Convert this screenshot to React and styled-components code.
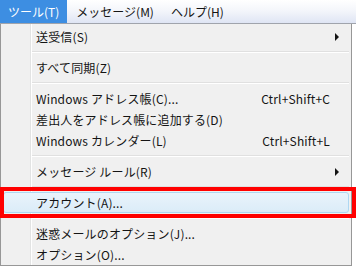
import React from "react";
import styled, { createGlobalStyle } from "styled-components";

const Global = createGlobalStyle`
  html, body {
    margin: 0;
    padding: 0;
    background: #ffffff;
  }
  body {
    font-family: "Noto Sans CJK JP", "Noto Sans", sans-serif;
    font-size: 12px;
    color: #141414;
  }
`;

const Screen = styled.div`
  position: relative;
  width: 356px;
  height: 268px;
  overflow: hidden;
`;

const MenuBar = styled.div`
  display: flex;
  height: 23px;
  border-bottom: 1px solid #a0a4ac;
  background: linear-gradient(#ffffff 0%, #f4f6fb 45%, #dfe5f4 100%);
`;

const BarItem = styled.div`
  display: flex;
  align-items: center;
  padding: 0 ${(p) => p.$pad || 8}px;
  height: 23px;
  color: ${(p) => (p.$active ? "#ffffff" : "#141414")};
  background: ${(p) => (p.$active ? "#3d8ee2" : "transparent")};
`;

const Menu = styled.div`
  position: relative;
  width: 350px;
  padding: 2px 0 0;
  background: #f0f0f0;
  border-left: 1px solid #979797;
  border-right: 1px solid #979797;
  border-bottom: 1px solid #979797;
  display: flex;
  flex-direction: column;
`;

const Gutter = styled.div`
  position: absolute;
  left: 29px;
  top: 0;
  bottom: 0;
  width: 1px;
  background: #e2e3e3;
  border-right: 1px solid #ffffff;
`;

const Item = styled.div`
  position: relative;
  display: flex;
  align-items: center;
  height: 21px;
  margin: 0 2px;
  padding: 0 18px 0 32px;
  border: 1px solid ${(p) => (p.$hover ? "#aed7f2" : "transparent")};
  border-radius: 3px;
  box-sizing: border-box;
  letter-spacing: 0.15px;
  background: ${(p) =>
    p.$hover ? "linear-gradient(#e9f3fb, #dbecf8)" : "transparent"};
`;

const Label = styled.span`
  flex: 1;
  white-space: nowrap;
`;

const Shortcut = styled.span`
  white-space: nowrap;
`;

const Arrow = styled.span`
  width: 0;
  height: 0;
  margin-right: -9px;
  border-top: 4px solid transparent;
  border-bottom: 4px solid transparent;
  border-left: 4px solid #141414;
`;

const Separator = styled.div`
  height: 10px;
  display: flex;
  align-items: center;
  padding-left: 31px;
  padding-right: 2px;

  &::after {
    content: "";
    flex: 1;
    height: 1px;
    background: #e0e0e0;
    border-bottom: 1px solid #ffffff;
  }
`;

const Highlight = styled.div`
  position: absolute;
  left: 0;
  top: 187px;
  width: 356px;
  height: 31px;
  box-sizing: border-box;
  border: 4px solid #ff0000;
`;

const rows = [
  { label: "送受信(S)", arrow: true },
  "sep",
  { label: "すべて同期(Z)" },
  "sep",
  { label: "Windows アドレス帳(C)...", key: "Ctrl+Shift+C" },
  { label: "差出人をアドレス帳に追加する(D)" },
  { label: "Windows カレンダー(L)", key: "Ctrl+Shift+L" },
  "sep",
  { label: "メッセージ ルール(R)", arrow: true },
  "sep",
  { label: "アカウント(A)...", hover: true },
  "sep",
  { label: "迷惑メールのオプション(J)..." },
  { label: "オプション(O)..." },
];

export default function App() {
  return (
    <Screen>
      <Global />
      <MenuBar>
        <BarItem $active>ツール(T)</BarItem>
        <BarItem $pad={9}>メッセージ(M)</BarItem>
        <BarItem>ヘルプ(H)</BarItem>
      </MenuBar>
      <Menu>
        <Gutter />
        {rows.map((r, i) =>
          r === "sep" ? (
            <Separator key={i} />
          ) : (
            <Item key={i} $hover={r.hover}>
              <Label>{r.label}</Label>
              {r.key && <Shortcut>{r.key}</Shortcut>}
              {r.arrow && <Arrow />}
            </Item>
          )
        )}
      </Menu>
      <Highlight />
    </Screen>
  );
}
